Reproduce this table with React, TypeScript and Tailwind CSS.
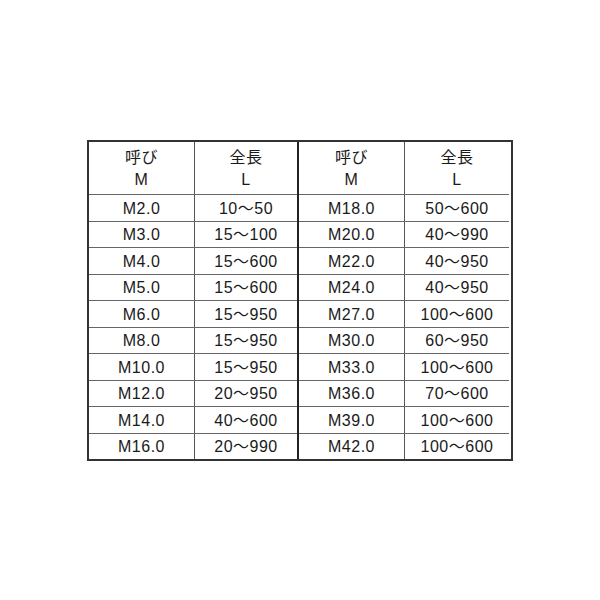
import React from "react";

const left: [string, string][] = [
  ["M2.0", "10～50"],
  ["M3.0", "15～100"],
  ["M4.0", "15～600"],
  ["M5.0", "15～600"],
  ["M6.0", "15～950"],
  ["M8.0", "15～950"],
  ["M10.0", "15～950"],
  ["M12.0", "20～950"],
  ["M14.0", "40～600"],
  ["M16.0", "20～990"],
];
const right: [string, string][] = [
  ["M18.0", "50～600"],
  ["M20.0", "40～990"],
  ["M22.0", "40～950"],
  ["M24.0", "40～950"],
  ["M27.0", "100～600"],
  ["M30.0", "60～950"],
  ["M33.0", "100～600"],
  ["M36.0", "70～600"],
  ["M39.0", "100～600"],
  ["M42.0", "100～600"],
];

function Half({ rows, rightSide }: { rows: [string, string][]; rightSide?: boolean }) {
  const w1 = "w-[105px]";
  const w2 = rightSide ? "w-[105px]" : "w-[103px]";
  return (
    <div className="flex flex-col">
      <div className="flex h-[52px]">
        <div className={`${w1} flex flex-col items-center justify-center leading-[22px] pt-[2px]`}>
          <span>呼び</span>
          <span>M</span>
        </div>
        <div className={`${w2} border-l border-[#555] flex flex-col items-center justify-center leading-[22px] pt-[2px]`}>
          <span>全長</span>
          <span>L</span>
        </div>
      </div>
      {rows.map(([m, l], i) => (
        <div key={i} className="flex h-[26.5px] border-t border-[#666]">
          <div className={`${w1} flex items-center justify-center pt-[2px]`}>{m}</div>
          <div className={`${w2} border-l border-[#555] flex items-center justify-center pt-[2px]`}>{l}</div>
        </div>
      ))}
    </div>
  );
}

export default function App() {
  return (
    <div
      className="w-[600px] h-[600px] bg-white pt-[140px] pl-[87px] text-[16px] tracking-[0.5px] text-[#1a1a1a]"
      style={{ fontFamily: '"Liberation Sans", "Noto Sans CJK JP", sans-serif' }}
    >
      <div className="flex w-[426px] h-[321px] border-2 border-[#333]">
        <Half rows={left} />
        <div className="w-[2px] bg-[#222]" />
        <Half rows={right} rightSide />
      </div>
    </div>
  );
}
